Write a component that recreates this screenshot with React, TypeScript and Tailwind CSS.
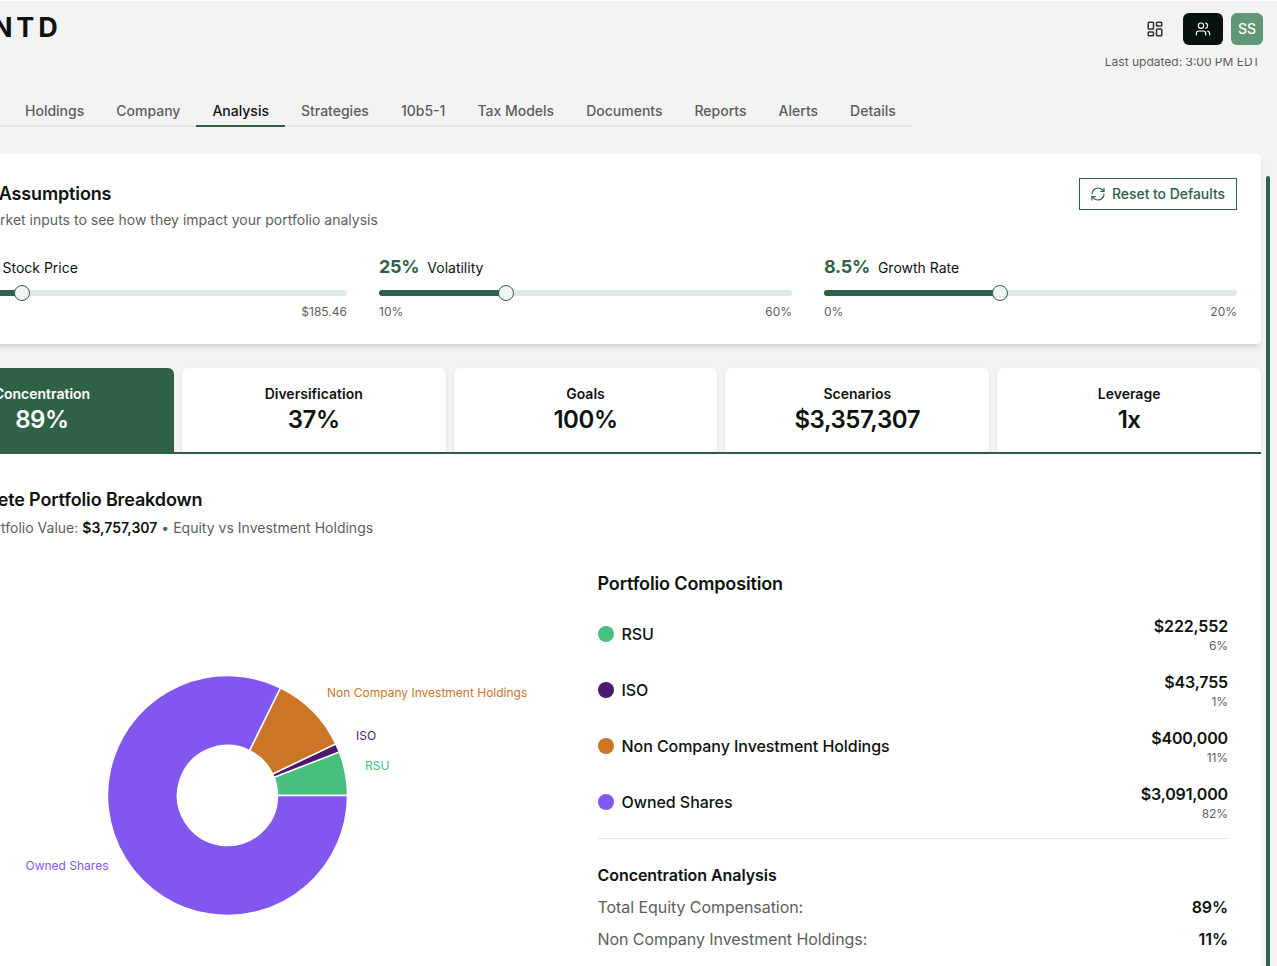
import React from 'react'
import { LayoutDashboard, RefreshCw, Users } from 'lucide-react'

const tabs = ['Holdings', 'Company', 'Analysis', 'Strategies', '10b5-1', 'Tax Models', 'Documents', 'Reports', 'Alerts', 'Details']

const sliders = [
  { value: '$92.73', label: 'Stock Price', min: '$46.37', max: '$185.46', pct: 21.3 },
  { value: '25%', label: 'Volatility', min: '10%', max: '60%', pct: 30.7 },
  { value: '8.5%', label: 'Growth Rate', min: '0%', max: '20%', pct: 42.6 },
]

const metrics = [
  { label: 'Concentration', value: '89%', active: true },
  { label: 'Diversification', value: '37%' },
  { label: 'Goals', value: '100%' },
  { label: 'Scenarios', value: '$3,357,307' },
  { label: 'Leverage', value: '1x' },
]

const holdings = [
  { name: 'RSU', amount: '$222,552', pct: '6%', dot: 'bg-[#48bf7e]', raw: 222552, fill: '#48bf7e' },
  { name: 'ISO', amount: '$43,755', pct: '1%', dot: 'bg-[#4c1a6d]', raw: 43755, fill: '#4c1a6d' },
  { name: 'Non Company Investment Holdings', amount: '$400,000', pct: '11%', dot: 'bg-[#cd7527]', raw: 400000, fill: '#cd7527' },
  { name: 'Owned Shares', amount: '$3,091,000', pct: '82%', dot: 'bg-[#8257f0]', raw: 3091000, fill: '#8257f0' },
]

const CX = 285.5
const CY = 199.5
const OUTER = 120
const INNER = 50

function slicePath(start: number, end: number) {
  const pt = (r: number, deg: number) => {
    const a = (deg * Math.PI) / 180
    return `${CX + r * Math.cos(a)} ${CY - r * Math.sin(a)}`
  }
  const large = end - start > 180 ? 1 : 0
  return `M${pt(OUTER, start)} A${OUTER} ${OUTER} 0 ${large} 0 ${pt(OUTER, end)} L${pt(INNER, end)} A${INNER} ${INNER} 0 ${large} 1 ${pt(INNER, start)} Z`
}

function Donut() {
  const total = holdings.reduce((sum, h) => sum + h.raw, 0)
  let angle = 0
  return (
    <svg width="631" height="400" className="block" style={{ fontFamily: 'Inter, sans-serif' }}>
      {holdings.map((h) => {
        const start = angle
        angle += (h.raw / total) * 360
        return <path key={h.name} d={slicePath(start, angle)} fill={h.fill} stroke="#fff" strokeWidth="1.5" />
      })}
      <text x="385" y="101" fontSize="12" fill="#cd7527">Non Company Investment Holdings</text>
      <text x="414" y="144" fontSize="12" fill="#4c1a6d">ISO</text>
      <text x="423" y="174" fontSize="12" fill="#48bf7e">RSU</text>
      <text x="83.5" y="274" fontSize="12" fill="#8257f0">Owned Shares</text>
    </svg>
  )
}

export default function App() {
  return (
    <div className="relative w-[1277px] h-[966px] overflow-hidden bg-[#f3f3f3] border-t border-white text-[#0d140f] font-['Inter',sans-serif]">
      {/* Top bar */}
      <header className="relative z-10 h-[57px] bg-[#f3f3f3] flex items-start justify-between pr-[14px] pt-3">
        <span className="-ml-[8px] text-[27px] leading-[30px] font-bold tracking-[0.14em]">NTD</span>
        <div className="flex items-center gap-2">
          <button className="w-10 h-8 flex items-center justify-center text-[#2b2f2c]">
            <LayoutDashboard size={18} strokeWidth={2} />
          </button>
          <button className="w-10 h-8 rounded-md bg-[#0a120d] text-white flex items-center justify-center">
            <Users size={16} strokeWidth={1.75} />
          </button>
          <div className="w-8 h-8 rounded-md bg-[#5e9877] text-white text-sm font-medium flex items-center justify-center">SS</div>
        </div>
      </header>

      <main className="-ml-[90px] w-[1351px] -mt-[4px]">
        <div className="text-xs leading-4 text-[#5b5f5c] text-right pr-[1px]">Last updated: 3:00 PM EDT</div>

        {/* Page tabs */}
        <div className="mt-[23px] w-[1002px] flex border-b-2 border-[#e1e3e6]">
          <div className="w-[99px] px-4 pt-2 pb-1 text-sm leading-5 font-medium text-[#5b5f5c] -mb-[2px]">Overview</div>
          {tabs.map((tab) => (
            <div
              key={tab}
              className={
                tab === 'Analysis'
                  ? 'px-4 pt-2 pb-1 text-sm leading-5 font-medium text-[#0d140f] border-b-2 border-[#2f6146] -mb-[2px]'
                  : 'px-4 pt-2 pb-1 text-sm leading-5 font-medium text-[#5b5f5c] border-b-2 border-transparent -mb-[2px]'
              }
            >
              {tab}
            </div>
          ))}
        </div>

        {/* Market assumptions */}
        <section className="mt-[27px] bg-white rounded-sm shadow-md p-6">
          <div className="flex items-start justify-between">
            <div className="pt-[2px]">
              <h2 className="text-lg leading-7 font-semibold tracking-[-0.14px]">Market Assumptions</h2>
              <p className="mt-[2px] text-sm leading-5 text-[#5b5f5c] tracking-[0.01px]">Adjust market inputs to see how they impact your portfolio analysis</p>
            </div>
            <button className="h-8 pl-[10px] pr-[11px] flex items-center gap-[6px] border border-[#2f6146] text-[#2f6146] text-sm font-medium">
              <RefreshCw size={16} strokeWidth={1.75} />
              <span className="tracking-[-0.05px]">Reset to Defaults</span>
            </button>
          </div>
          <div className="mt-[23px] grid grid-cols-3 gap-8">
            {sliders.map((s) => (
              <div key={s.label}>
                <div className="flex items-baseline gap-2">
                  <span className="text-lg leading-7 font-bold tracking-[-0.28px] text-[#2f6146]">{s.value}</span>
                  <span className="text-sm leading-5">{s.label}</span>
                </div>
                <div className="relative mt-[9px] h-[6px] rounded-full bg-[#deeae5]">
                  <div className="h-full rounded-full bg-[#2f6146]" style={{ width: `${s.pct}%` }} />
                  <div
                    className="absolute top-1/2 w-4 h-4 -translate-x-1/2 -translate-y-1/2 rounded-full bg-[#f0f5f2] border border-[#2f6146]"
                    style={{ left: `${s.pct}%` }}
                  />
                </div>
                <div className="mt-2 flex justify-between text-xs leading-4 text-[#5b5f5c]">
                  <span>{s.min}</span>
                  <span>{s.max}</span>
                </div>
              </div>
            ))}
          </div>
        </section>

        {/* Metric tabs */}
        <div className="mt-6 grid grid-cols-5 gap-2 border-b-2 border-[#2f6146]">
          {metrics.map((m) => (
            <div
              key={m.label}
              className={
                m.active
                  ? 'py-4 rounded-t-md bg-[#2f6146] text-white text-center'
                  : 'py-4 rounded-t-md bg-white shadow-sm text-center'
              }
            >
              <div className="text-sm leading-5 font-semibold">{m.label}</div>
              <div className="text-2xl leading-8 font-semibold tracking-[-0.45px]">{m.value}</div>
            </div>
          ))}
        </div>

        {/* Breakdown */}
        <section className="bg-white p-8 h-[600px]">
          <h2 className="text-lg leading-7 font-semibold tracking-[-0.14px]">Complete Portfolio Breakdown</h2>
          <p className="mt-1 text-sm leading-5 text-[#5b5f5c] tracking-[0.01px]">
            Total Portfolio Value: <span className="font-semibold text-[#0d140f]">$3,757,307</span> • Equity vs Investment Holdings
          </p>
          <div className="mt-8 grid grid-cols-2 gap-6">
            <div className="pt-[26px]">
              <Donut />
            </div>
            <div className="tracking-[-0.06px]">
              <h3 className="text-lg leading-7 font-semibold tracking-[-0.14px] mb-4">Portfolio Composition</h3>
              <div className="flex flex-col gap-4 pr-px">
                {holdings.map((h) => (
                  <div key={h.name} className="flex items-center justify-between">
                    <div className="flex items-center gap-2">
                      <span className={`w-4 h-4 rounded-full ${h.dot}`} />
                      <span className="text-base font-medium">{h.name}</span>
                    </div>
                    <div className="text-right">
                      <div className="text-base leading-6 font-semibold tracking-[-0.15px]">{h.amount}</div>
                      <div className="text-xs leading-4 text-[#5b5f5c]">{h.pct}</div>
                    </div>
                  </div>
                ))}
              </div>
              <div className="mt-4 pt-6 mr-px border-t border-[#e3e5e8]">
                <h4 className="text-base leading-6 font-semibold mb-2">Concentration Analysis</h4>
                <div className="flex flex-col gap-2">
                  <div className="flex justify-between text-base leading-6">
                    <span className="text-[#5b5f5c]">Total Equity Compensation:</span>
                    <span className="font-semibold">89%</span>
                  </div>
                  <div className="flex justify-between text-base leading-6">
                    <span className="text-[#5b5f5c]">Non Company Investment Holdings:</span>
                    <span className="font-semibold">11%</span>
                  </div>
                </div>
              </div>
            </div>
          </div>
        </section>
      </main>

      {/* Scrollbar thumb */}
      <div className="absolute left-[1266px] top-[175px] w-1 h-[800px] rounded-full bg-[#2f6146]" />
    </div>
  )
}
